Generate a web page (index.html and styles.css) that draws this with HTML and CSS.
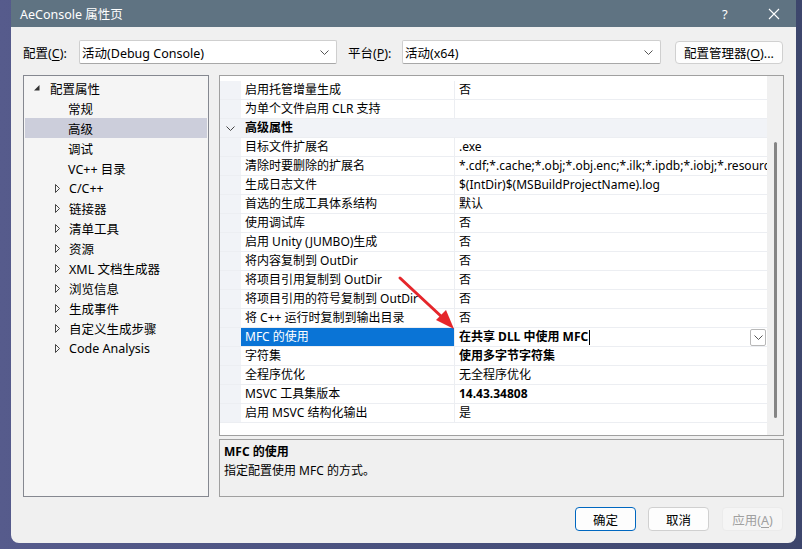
FILE: index.html
```html
<!DOCTYPE html>
<html lang="zh-CN">
<head>
    <meta charset="UTF-8">
    <title>AeConsole 属性页</title>
    <link rel="stylesheet" href="styles.css">
</head>
<body>
    <div class="window">
        <div class="titlebar">
            <span class="title">AeConsole 属性页</span>
            <span class="help">?</span>
            <span class="close">
                <svg width="12" height="12" viewBox="0 0 12 12"><path d="M1 1L11 11M11 1L1 11" stroke="#fff" stroke-width="1.1" fill="none"/></svg>
            </span>
        </div>

        <div class="config-bar">
            <span class="lbl lbl-config">配置(<u>C</u>):</span>
            <div class="combo combo-config">
                <span>活动(Debug Console)</span>
                <svg class="chev" width="9" height="5" viewBox="0 0 9 5"><path d="M0.5 0.5L4.5 4.5L8.5 0.5" stroke="#555" fill="none"/></svg>
            </div>
            <span class="lbl lbl-platform">平台(<u>P</u>):</span>
            <div class="combo combo-platform">
                <span>活动(x64)</span>
                <svg class="chev" width="9" height="5" viewBox="0 0 9 5"><path d="M0.5 0.5L4.5 4.5L8.5 0.5" stroke="#555" fill="none"/></svg>
            </div>
            <button class="btn btn-manager">配置管理器(<u>O</u>)...</button>
        </div>

        <div class="main">
            <div class="tree">
                <div class="node root">
                    <svg class="twisty" width="6" height="6" viewBox="0 0 6 6"><polygon points="5.5,0 5.5,5.5 0,5.5" fill="#333"/></svg>
                    <span>配置属性</span>
                </div>
                <div class="node leaf">常规</div>
                <div class="node leaf selected">高级</div>
                <div class="node leaf">调试</div>
                <div class="node leaf">VC++ 目录</div>
                <div class="node branch"><svg class="expander" width="6" height="9" viewBox="0 0 6 9"><polygon points="0.5,0.5 4.5,4.5 0.5,8.5" stroke="#444" fill="none"/></svg><span>C/C++</span></div>
                <div class="node branch"><svg class="expander" width="6" height="9" viewBox="0 0 6 9"><polygon points="0.5,0.5 4.5,4.5 0.5,8.5" stroke="#444" fill="none"/></svg><span>链接器</span></div>
                <div class="node branch"><svg class="expander" width="6" height="9" viewBox="0 0 6 9"><polygon points="0.5,0.5 4.5,4.5 0.5,8.5" stroke="#444" fill="none"/></svg><span>清单工具</span></div>
                <div class="node branch"><svg class="expander" width="6" height="9" viewBox="0 0 6 9"><polygon points="0.5,0.5 4.5,4.5 0.5,8.5" stroke="#444" fill="none"/></svg><span>资源</span></div>
                <div class="node branch"><svg class="expander" width="6" height="9" viewBox="0 0 6 9"><polygon points="0.5,0.5 4.5,4.5 0.5,8.5" stroke="#444" fill="none"/></svg><span>XML 文档生成器</span></div>
                <div class="node branch"><svg class="expander" width="6" height="9" viewBox="0 0 6 9"><polygon points="0.5,0.5 4.5,4.5 0.5,8.5" stroke="#444" fill="none"/></svg><span>浏览信息</span></div>
                <div class="node branch"><svg class="expander" width="6" height="9" viewBox="0 0 6 9"><polygon points="0.5,0.5 4.5,4.5 0.5,8.5" stroke="#444" fill="none"/></svg><span>生成事件</span></div>
                <div class="node branch"><svg class="expander" width="6" height="9" viewBox="0 0 6 9"><polygon points="0.5,0.5 4.5,4.5 0.5,8.5" stroke="#444" fill="none"/></svg><span>自定义生成步骤</span></div>
                <div class="node branch"><svg class="expander" width="6" height="9" viewBox="0 0 6 9"><polygon points="0.5,0.5 4.5,4.5 0.5,8.5" stroke="#444" fill="none"/></svg><span>Code Analysis</span></div>
            </div>

            <div class="right">
                <div class="grid">
                    <div class="rows">
                        <div class="row"><div class="gutter"></div><div class="name">启用托管增量生成</div><div class="value">否</div></div>
                        <div class="row"><div class="gutter"></div><div class="name">为单个文件启用 CLR 支持</div><div class="value"></div></div>
                        <div class="row category">
                            <div class="gutter"><svg width="9" height="5" viewBox="0 0 9 5"><path d="M0.5 0.5L4.5 4.5L8.5 0.5" stroke="#444" fill="none"/></svg></div>
                            <div class="cat-name">高级属性</div>
                        </div>
                        <div class="row"><div class="gutter"></div><div class="name">目标文件扩展名</div><div class="value">.exe</div></div>
                        <div class="row"><div class="gutter"></div><div class="name">清除时要删除的扩展名</div><div class="value">*.cdf;*.cache;*.obj;*.obj.enc;*.ilk;*.ipdb;*.iobj;*.resource</div></div>
                        <div class="row"><div class="gutter"></div><div class="name">生成日志文件</div><div class="value">$(IntDir)$(MSBuildProjectName).log</div></div>
                        <div class="row"><div class="gutter"></div><div class="name">首选的生成工具体系结构</div><div class="value">默认</div></div>
                        <div class="row"><div class="gutter"></div><div class="name">使用调试库</div><div class="value">否</div></div>
                        <div class="row"><div class="gutter"></div><div class="name">启用 Unity (JUMBO)生成</div><div class="value">否</div></div>
                        <div class="row"><div class="gutter"></div><div class="name">将内容复制到 OutDir</div><div class="value">否</div></div>
                        <div class="row"><div class="gutter"></div><div class="name">将项目引用复制到 OutDir</div><div class="value">否</div></div>
                        <div class="row"><div class="gutter"></div><div class="name">将项目引用的符号复制到 OutDir</div><div class="value">否</div></div>
                        <div class="row"><div class="gutter"></div><div class="name">将 C++ 运行时复制到输出目录</div><div class="value">否</div></div>
                        <div class="row active">
                            <div class="gutter"></div>
                            <div class="name">MFC 的使用</div>
                            <div class="value bold">
                                <span>在共享 DLL 中使用 MFC</span><span class="caret"></span>
                                <span class="drop"><svg width="9" height="5" viewBox="0 0 9 5"><path d="M0.5 0.5L4.5 4.5L8.5 0.5" stroke="#555" fill="none"/></svg></span>
                            </div>
                        </div>
                        <div class="row"><div class="gutter"></div><div class="name">字符集</div><div class="value bold">使用多字节字符集</div></div>
                        <div class="row"><div class="gutter"></div><div class="name">全程序优化</div><div class="value">无全程序优化</div></div>
                        <div class="row"><div class="gutter"></div><div class="name">MSVC 工具集版本</div><div class="value bold">14.43.34808</div></div>
                        <div class="row"><div class="gutter"></div><div class="name">启用 MSVC 结构化输出</div><div class="value">是</div></div>
                    </div>
                    <div class="scrollbar"><div class="thumb"></div></div>
                </div>
                <div class="desc">
                    <div class="desc-title">MFC 的使用</div>
                    <div class="desc-text">指定配置使用 MFC 的方式。</div>
                </div>
            </div>
        </div>

        <div class="footer">
            <button class="btn btn-ok">确定</button>
            <button class="btn btn-cancel">取消</button>
            <button class="btn btn-apply">应用(<u>A</u>)</button>
        </div>
    </div>

    <svg class="arrow" width="802" height="549" viewBox="0 0 802 549">
        <line x1="400" y1="278" x2="443" y2="318" stroke="#e5262b" stroke-width="3" stroke-linecap="round"/>
        <polygon points="454,329 446,310 436,320" fill="#e5262b"/>
    </svg>
</body>
</html>
```

FILE: styles.css
```css
body {
    margin: 0;
    width: 802px;
    height: 549px;
    overflow: hidden;
    background: linear-gradient(90deg, #565b8c 0%, #474f7b 60%, #3d466c 100%);
    font-family: "Noto Sans", "Noto Sans CJK SC", sans-serif;
    font-size: 12px;
    color: #000;
}

u {
    text-decoration: underline;
    text-underline-offset: 2px;
}

.window {
    margin-left: 11px;
    width: 785px;
    height: 543px;
    background-color: #f0f0f0;
    border-radius: 0 0 8px 8px;
    display: flex;
    flex-direction: column;
}

.titlebar {
    height: 27px;
    background-color: #5f7382;
    color: #fff;
    display: flex;
    align-items: center;
    padding-left: 9px;
    font-size: 12.5px;
}

.title {
    flex: 1;
}

.help {
    font-size: 13px;
    width: 40px;
    margin-right: 6px;
}

.close {
    width: 28px;
    display: flex;
    padding-top: 1px;
}

.config-bar {
    display: flex;
    align-items: center;
    margin-top: 13px;
    height: 24px;
    padding-left: 12px;
    font-size: 12.5px;
}

.lbl-config {
    width: 56px;
}

.lbl-platform {
    width: 54px;
    margin-left: 11px;
}

.combo {
    height: 24px;
    box-sizing: border-box;
    background: #fff;
    border: 1px solid #cfcfcf;
    border-bottom-color: #a8a8a8;
    border-radius: 2px;
    display: flex;
    align-items: center;
    padding: 0 3px 0 2px;
}

.combo span {
    flex: 1;
}

.chev {
    margin-right: 4px;
}

.combo-config {
    width: 258px;
}

.combo-platform {
    width: 259px;
}

.btn {
    font-family: inherit;
    font-size: 12.5px;
    height: 24px;
    box-sizing: border-box;
    background: #fdfdfd;
    border: 1px solid #d0d0d0;
    border-radius: 4px;
    padding: 0;
    color: #000;
}

.btn-manager {
    margin-left: 14px;
    width: 108px;
    height: 23px;
}

.main {
    display: flex;
    margin-top: 11px;
    padding-left: 12px;
    height: 422px;
}

.tree {
    width: 186px;
    box-sizing: border-box;
    border: 1px solid #858890;
    background-color: #f5f5f5;
    padding: 2px 1px 0;
}

.node {
    height: 20px;
    display: flex;
    align-items: center;
    font-size: 12.5px;
}

.root {
    padding-left: 9px;
}

.root span {
    margin-left: 10px;
}

.leaf {
    padding-left: 43px;
}

.branch {
    padding-left: 30px;
}

.branch span {
    margin-left: 8px;
}

.selected {
    background-color: #cccedb;
}

.right {
    margin-left: 10px;
    width: 565px;
    display: flex;
    flex-direction: column;
}

.grid {
    height: 361px;
    box-sizing: border-box;
    border: 1px solid #a0a0a0;
    background: #fff;
    display: flex;
}

.rows {
    flex: 1;
    padding-top: 5px;
    overflow: hidden;
}

.row {
    height: 19px;
    box-sizing: border-box;
    border-bottom: 1px solid #eceef2;
    display: flex;
    line-height: 18px;
    font-size: 12px;
}

.gutter {
    width: 21px;
    flex-shrink: 0;
    background-color: #f1f3f7;
    display: flex;
    align-items: center;
    justify-content: center;
}

.name {
    width: 214px;
    flex-shrink: 0;
    box-sizing: border-box;
    border-right: 1px solid #eceef2;
    padding-left: 4px;
    white-space: nowrap;
    overflow: hidden;
}

.value {
    flex: 1;
    padding-left: 4px;
    white-space: nowrap;
    overflow: hidden;
    display: flex;
    align-items: center;
}

.bold {
    font-weight: bold;
}

.category {
    background-color: #f1f3f7;
}

.cat-name {
    font-weight: bold;
    padding-left: 4px;
}

.active .name {
    background-color: #0a74d6;
    color: #fff;
}

.caret {
    width: 1px;
    height: 15px;
    background: #000;
    margin-left: 1px;
}

.drop {
    margin-left: auto;
    margin-right: 1px;
    width: 16px;
    height: 17px;
    box-sizing: border-box;
    border: 1px solid #b8b8b8;
    border-radius: 2px;
    background: #fff;
    display: flex;
    align-items: center;
    justify-content: center;
}

.scrollbar {
    width: 16px;
    background-color: #f0f0f0;
    display: flex;
    justify-content: center;
    padding-top: 66px;
    box-sizing: border-box;
}

.thumb {
    width: 3px;
    height: 276px;
    border-radius: 2px;
    background-color: #858585;
}

.desc {
    margin-top: 3px;
    height: 58px;
    box-sizing: border-box;
    border: 1px solid #a0a0a0;
    padding: 2px 4px 0;
    line-height: 19px;
}

.desc-title {
    font-weight: bold;
}

.footer {
    display: flex;
    justify-content: flex-end;
    margin-top: 10px;
    padding-right: 13px;
}

.footer .btn {
    width: 61px;
}

.btn-ok {
    border-color: #0067c0;
}

.btn-cancel {
    margin-left: 12px;
}

.btn-apply {
    margin-left: 13px;
    background: #f5f5f5;
    border-color: #ebebeb;
    color: #a0a0a0;
}

.arrow {
    position: absolute;
    left: 0;
    top: 0;
    pointer-events: none;
}
```
